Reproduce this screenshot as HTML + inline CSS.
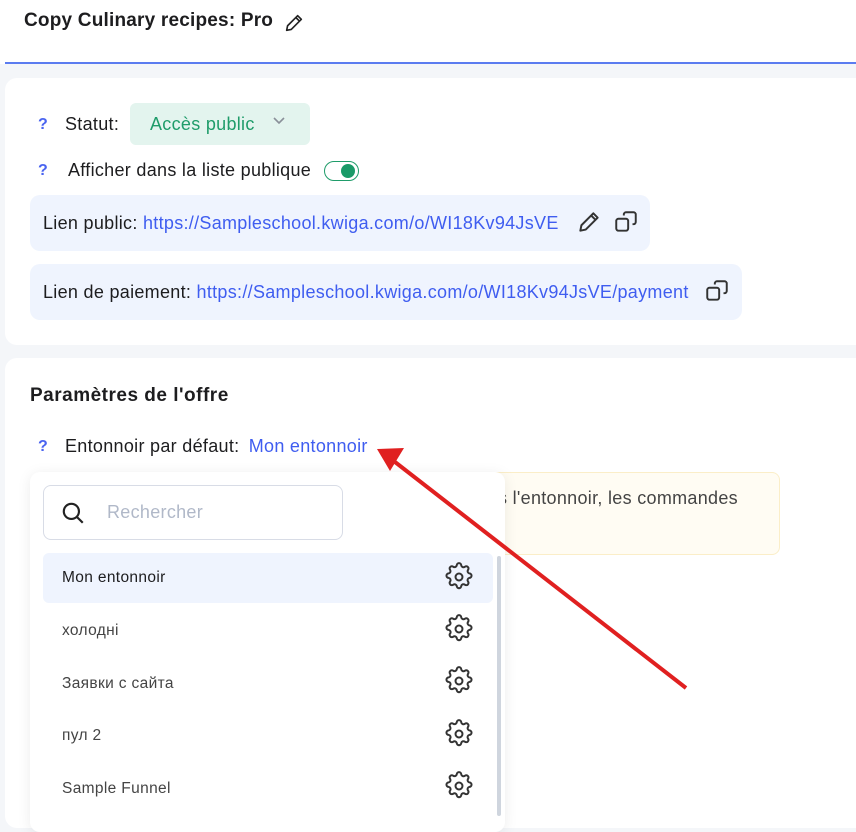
<!DOCTYPE html>
<html><head><meta charset="utf-8"><style>
*{box-sizing:border-box;margin:0;padding:0}
body{width:856px;height:813px;overflow:hidden;background:#f4f6f9;font-family:"Liberation Sans","Noto Sans CJK SC",sans-serif;color:#1d1d1f;position:relative}
.abs{position:absolute;white-space:nowrap}
.q{color:#4a64f0;font-size:16px;font-weight:bold}
.t{font-size:18px;letter-spacing:.3px}
.it{font-size:15.5px;letter-spacing:.35px}
a{color:#3f5df0;text-decoration:none}
</style></head><body>
<div class="abs" style="left:0;top:0;width:856px;height:64px;background:#fff"></div>
<div class="abs" style="left:24px;top:10px;font-size:19px;font-weight:bold;letter-spacing:.2px">Copy Culinary recipes: Pro</div>
<svg class="abs" style="left:283px;top:12px" width="22" height="22" viewBox="0 0 24 24" fill="none" stroke="#222" stroke-width="1.8" stroke-linejoin="round"><path d="M4 20l1-5L16 4l4 4L9 19z M14 6l4 4"/></svg>
<div class="abs" style="left:5px;top:62px;width:851px;height:2px;background:#5b7cf0"></div>

<div class="abs" style="left:5px;top:78px;width:870px;height:267px;background:#fff;border-radius:12px"></div>
<div class="abs q" style="left:38px;top:116px">?</div>
<div class="abs t" style="left:65px;top:114px">Statut:</div>
<div class="abs" style="left:130px;top:103px;width:180px;height:42px;background:#e3f4ee;border-radius:6px"></div>
<div class="abs t" style="left:150px;top:114px;color:#1f9c6a">Accès public</div>
<svg class="abs" style="left:272px;top:116px" width="14" height="10" viewBox="0 0 14 10" fill="none" stroke="#8a9099" stroke-width="1.6"><path d="M2 2l5 5 5-5"/></svg>
<div class="abs q" style="left:38px;top:162px">?</div>
<div class="abs t" style="left:68px;top:160px">Afficher dans la liste publique</div>
<div class="abs" style="left:324px;top:161px;width:35px;height:20px;border:1.5px solid #1f9c6a;border-radius:10px"></div>
<div class="abs" style="left:341px;top:164px;width:14px;height:14px;background:#1a9a68;border-radius:50%"></div>

<div class="abs" style="left:30px;top:195px;width:620px;height:56px;background:#eff4fe;border-radius:10px"></div>
<div class="abs t" style="left:43px;top:213px">Lien public: <a>https://Sampleschool.kwiga.com/o/WI18Kv94JsVE</a></div>
<svg class="abs" style="left:576px;top:209px" width="26" height="26" viewBox="0 0 24 24" fill="none" stroke="#333" stroke-width="1.8" stroke-linejoin="round"><path d="M4 20l1-5L16 4l4 4L9 19z M14 6l4 4"/></svg>
<svg class="abs" style="left:613px;top:209px" width="26" height="26" viewBox="0 0 24 24" fill="none" stroke="#333" stroke-width="1.8"><rect x="3" y="9" width="11" height="11" rx="2"/><path d="M10 6V5a2 2 0 0 1 2-2h7a2 2 0 0 1 2 2v7a2 2 0 0 1-2 2h-1"/></svg>
<div class="abs" style="left:30px;top:264px;width:712px;height:56px;background:#eff4fe;border-radius:10px"></div>
<div class="abs t" style="left:43px;top:282px">Lien de paiement: <a>https://Sampleschool.kwiga.com/o/WI18Kv94JsVE/payment</a></div>
<svg class="abs" style="left:704px;top:278px" width="26" height="26" viewBox="0 0 24 24" fill="none" stroke="#333" stroke-width="1.8"><rect x="3" y="9" width="11" height="11" rx="2"/><path d="M10 6V5a2 2 0 0 1 2-2h7a2 2 0 0 1 2 2v7a2 2 0 0 1-2 2h-1"/></svg>

<div class="abs" style="left:5px;top:358px;width:870px;height:470px;background:#fff;border-radius:12px"></div>
<div class="abs" style="left:30px;top:385px;font-size:19px;font-weight:bold;letter-spacing:.5px">Paramètres de l'offre</div>
<div class="abs q" style="left:38px;top:438px">?</div>
<div class="abs t" style="left:65px;top:436px">Entonnoir par défaut: <a style="margin-left:4px">Mon entonnoir</a></div>

<div class="abs" style="left:470px;top:472px;width:310px;height:83px;background:#fffcf3;border:1px solid #fbeec8;border-radius:8px"></div>
<div class="abs t" style="left:498px;top:488px;color:#444">s l'entonnoir, les commandes</div>

<div class="abs" style="left:30px;top:472px;width:475px;height:360px;background:#fff;border-radius:10px;box-shadow:0 2px 14px rgba(0,0,0,.08)"></div>
<div class="abs" style="left:43px;top:485px;width:300px;height:55px;border:1px solid #d8dce6;border-radius:8px"></div>
<svg class="abs" style="left:60px;top:500px" width="26" height="26" viewBox="0 0 24 24" fill="none" stroke="#222" stroke-width="2"><circle cx="10.5" cy="10.5" r="7"/><path d="M16 16l5 5"/></svg>
<div class="abs t" style="left:107px;top:502px;color:#b0b8c8">Rechercher</div>
<div class="abs" style="left:43px;top:553px;width:450px;height:50px;background:#eff4fe;border-radius:6px"></div>
<div class="abs" style="left:497px;top:556px;width:4px;height:260px;background:#cfd5de;border-radius:2px"></div>
<div class="abs it" style="left:62px;top:569px;color:#1d1d1f">Mon entonnoir</div>
<div class="abs it" style="left:62px;top:622px;color:#444">холодні</div>
<div class="abs it" style="left:62px;top:675px;color:#444">Заявки с сайта</div>
<div class="abs it" style="left:62px;top:727px;color:#444">пул 2</div>
<div class="abs it" style="left:62px;top:780px;color:#444">Sample Funnel</div>
<svg width="0" height="0" style="position:absolute"><defs><g id="g"><path d="M10.3 3.3a1.7 1.7 0 0 1 3.4 0 1.7 1.7 0 0 0 2.6 1.1 1.7 1.7 0 0 1 2.4 2.4 1.7 1.7 0 0 0 1 2.5 1.7 1.7 0 0 1 0 3.4 1.7 1.7 0 0 0-1 2.6 1.7 1.7 0 0 1-2.4 2.4 1.7 1.7 0 0 0-2.6 1 1.7 1.7 0 0 1-3.4 0 1.7 1.7 0 0 0-2.5-1 1.7 1.7 0 0 1-2.4-2.4 1.7 1.7 0 0 0-1.1-2.6 1.7 1.7 0 0 1 0-3.4 1.7 1.7 0 0 0 1.1-2.5 1.7 1.7 0 0 1 2.4-2.4 1.7 1.7 0 0 0 2.5-1.1z" fill="none" stroke="#333" stroke-width="1.5"/><circle cx="12" cy="12" r="2.6" fill="none" stroke="#333" stroke-width="1.5"/></g></defs></svg>
<svg class="abs" style="left:443px;top:561px" width="32" height="32" viewBox="0 0 24 24"><use href="#g"/></svg>
<svg class="abs" style="left:443px;top:613px" width="32" height="32" viewBox="0 0 24 24"><use href="#g"/></svg>
<svg class="abs" style="left:443px;top:665px" width="32" height="32" viewBox="0 0 24 24"><use href="#g"/></svg>
<svg class="abs" style="left:443px;top:718px" width="32" height="32" viewBox="0 0 24 24"><use href="#g"/></svg>
<svg class="abs" style="left:443px;top:770px" width="32" height="32" viewBox="0 0 24 24"><use href="#g"/></svg>

<svg class="abs" style="left:0;top:0" width="856" height="813"><line x1="686" y1="688" x2="395" y2="462" stroke="#e02020" stroke-width="4"/><polygon points="377,449 404,448 390,471" fill="#e02020"/></svg>
</body></html>
